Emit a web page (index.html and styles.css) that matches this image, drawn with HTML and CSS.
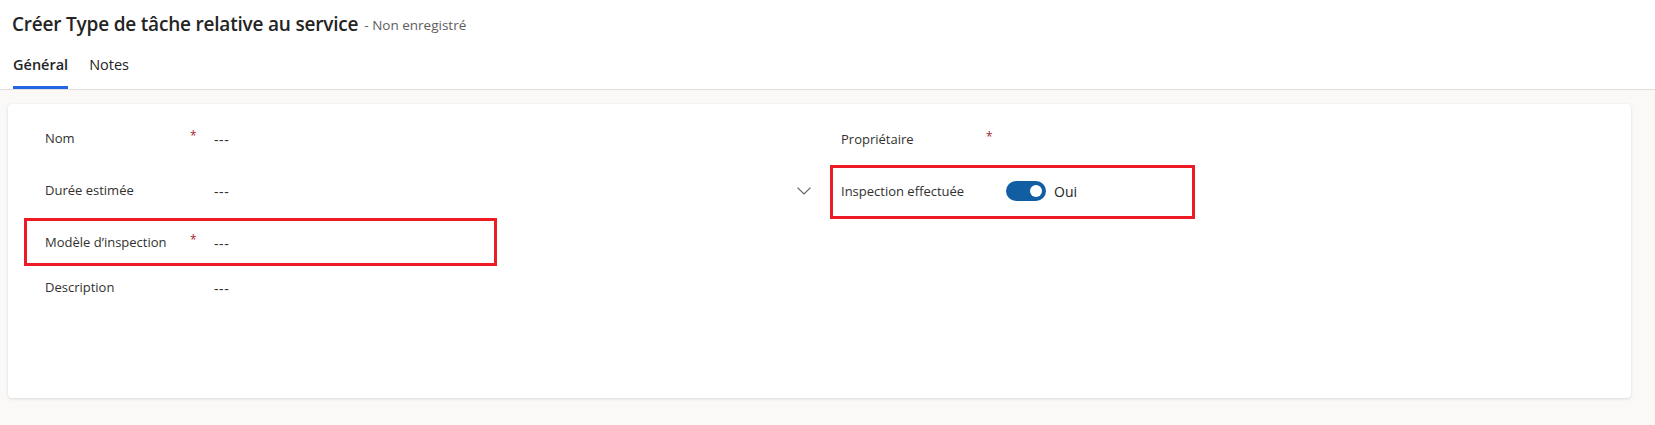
FILE: index.html
```html
<!DOCTYPE html>
<html lang="fr">
<head>
<meta charset="utf-8">
<link rel="stylesheet" href="styles.css">
</head>
<body>
<header class="header">
  <div class="title-line">
    <h1 class="title">Créer Type de tâche relative au service</h1>
    <span class="status">- Non enregistré</span>
  </div>
  <nav class="tabs">
    <span class="tab tab-active">Général</span>
    <span class="tab">Notes</span>
  </nav>
</header>
<main class="content">
  <section class="card">
    <div class="col col-left">
      <div class="row r1">
        <span class="label">Nom</span><span class="req">*</span>
        <span class="value">---</span>
      </div>
      <div class="row r2">
        <span class="label">Durée estimée</span><span class="req"></span>
        <span class="value">---</span>
        <svg class="chev" width="14" height="8" viewBox="0 0 14 8"><path d="M0.5 0.6 L7 7 L13.5 0.6" fill="none" stroke="#605e5c" stroke-width="1.1"/></svg>
      </div>
      <div class="row r3">
        <span class="label">Modèle d’inspection</span><span class="req">*</span>
        <span class="value">---</span>
      </div>
      <div class="row r4">
        <span class="label">Description</span><span class="req"></span>
        <span class="value">---</span>
      </div>
    </div>
    <div class="col col-right">
      <div class="row r1">
        <span class="label">Propriétaire</span><span class="req">*</span>
        <span class="value"></span>
      </div>
      <div class="row r2">
        <span class="label">Inspection effectuée</span><span class="req req-short"></span>
        <span class="value toggle-wrap"><span class="toggle"><span class="knob"></span></span><span class="toggle-text">Oui</span></span>
      </div>
    </div>
    <div class="mark mark-left"></div>
    <div class="mark mark-right"></div>
  </section>
</main>
</body>
</html>
```
FILE: styles.css
```css
* { box-sizing: border-box; }
html, body { margin: 0; padding: 0; }
body {
  width: 1655px;
  height: 425px;
  overflow: hidden;
  background: #faf9f8;
  font-family: "Segoe UI", "Open Sans", "Noto Sans", sans-serif;
  color: #323130;
}
.header {
  background: #ffffff;
  border-bottom: 1px solid #e1dfdd;
  padding: 0 0 0 12px;
  height: 90px;
}
.title-line {
  height: 48px;
  display: flex;
  align-items: center;
  gap: 6px;
}
.title {
  margin: 0;
  font-size: 19px;
  font-weight: 600;
  color: #242424;
  letter-spacing: -0.2px;
}
.status {
  font-size: 13.5px;
  color: #605e5c;
  padding-top: 2px;
}
.tabs {
  display: flex;
  gap: 21px;
  padding-left: 1px;
}
.tab {
  font-size: 14.5px;
  line-height: 20px;
  padding: 7px 0 11px;
  border-bottom: 3px solid transparent;
  color: #242424;
}
.tab-active {
  font-weight: 600;
  border-bottom-color: #2266e3;
}
.content {
  padding: 14px 24px 0 8px;
}
.card {
  position: relative;
  background: #ffffff;
  border-radius: 4px;
  box-shadow: 0 1px 3px rgba(0,0,0,0.12), 0 0 1px rgba(0,0,0,0.08);
  height: 294px;
  padding: 14px 0 0 37px;
  display: grid;
  grid-template-columns: 770px 770px;
  column-gap: 26px;
  align-items: start;
}
.col { display: flex; flex-direction: column; }
.col-right { padding-top: 1px; }
.row {
  display: flex;
  align-items: center;
  height: 40px;
  font-size: 13px;
}
.r2, .r3 { margin-top: 12px; }
.r4 { margin-top: 5px; }
.label {
  width: 137px;
  color: #323130;
}
.req {
  width: 32px;
  color: #a4262c;
  font-size: 12px;
  align-self: flex-start;
  padding-top: 9px;
  padding-left: 8px;
}
.req-short { width: 28px; }
.value {
  flex: 1;
  color: #323130;
  padding-top: 3px;
  font-size: 14px;
  letter-spacing: 0.6px;
}
.chev { margin-right: 4px; margin-top: 2px; }
.toggle-wrap {
  display: flex;
  align-items: center;
  gap: 8px;
  padding-top: 0;
  letter-spacing: 0;
}
.toggle {
  width: 40px;
  height: 20px;
  border-radius: 10px;
  background: #115ea3;
  display: flex;
  align-items: center;
  justify-content: flex-end;
  padding-right: 4px;
}
.knob {
  width: 12px;
  height: 12px;
  border-radius: 50%;
  background: #ffffff;
}
.toggle-text { font-size: 14px; color: #242424; }
.mark {
  position: absolute;
  border: 3px solid #ed1c24;
}
.mark-left { left: 16px; top: 114px; width: 473px; height: 48px; }
.mark-right { left: 822px; top: 61px; width: 365px; height: 54px; }
```
